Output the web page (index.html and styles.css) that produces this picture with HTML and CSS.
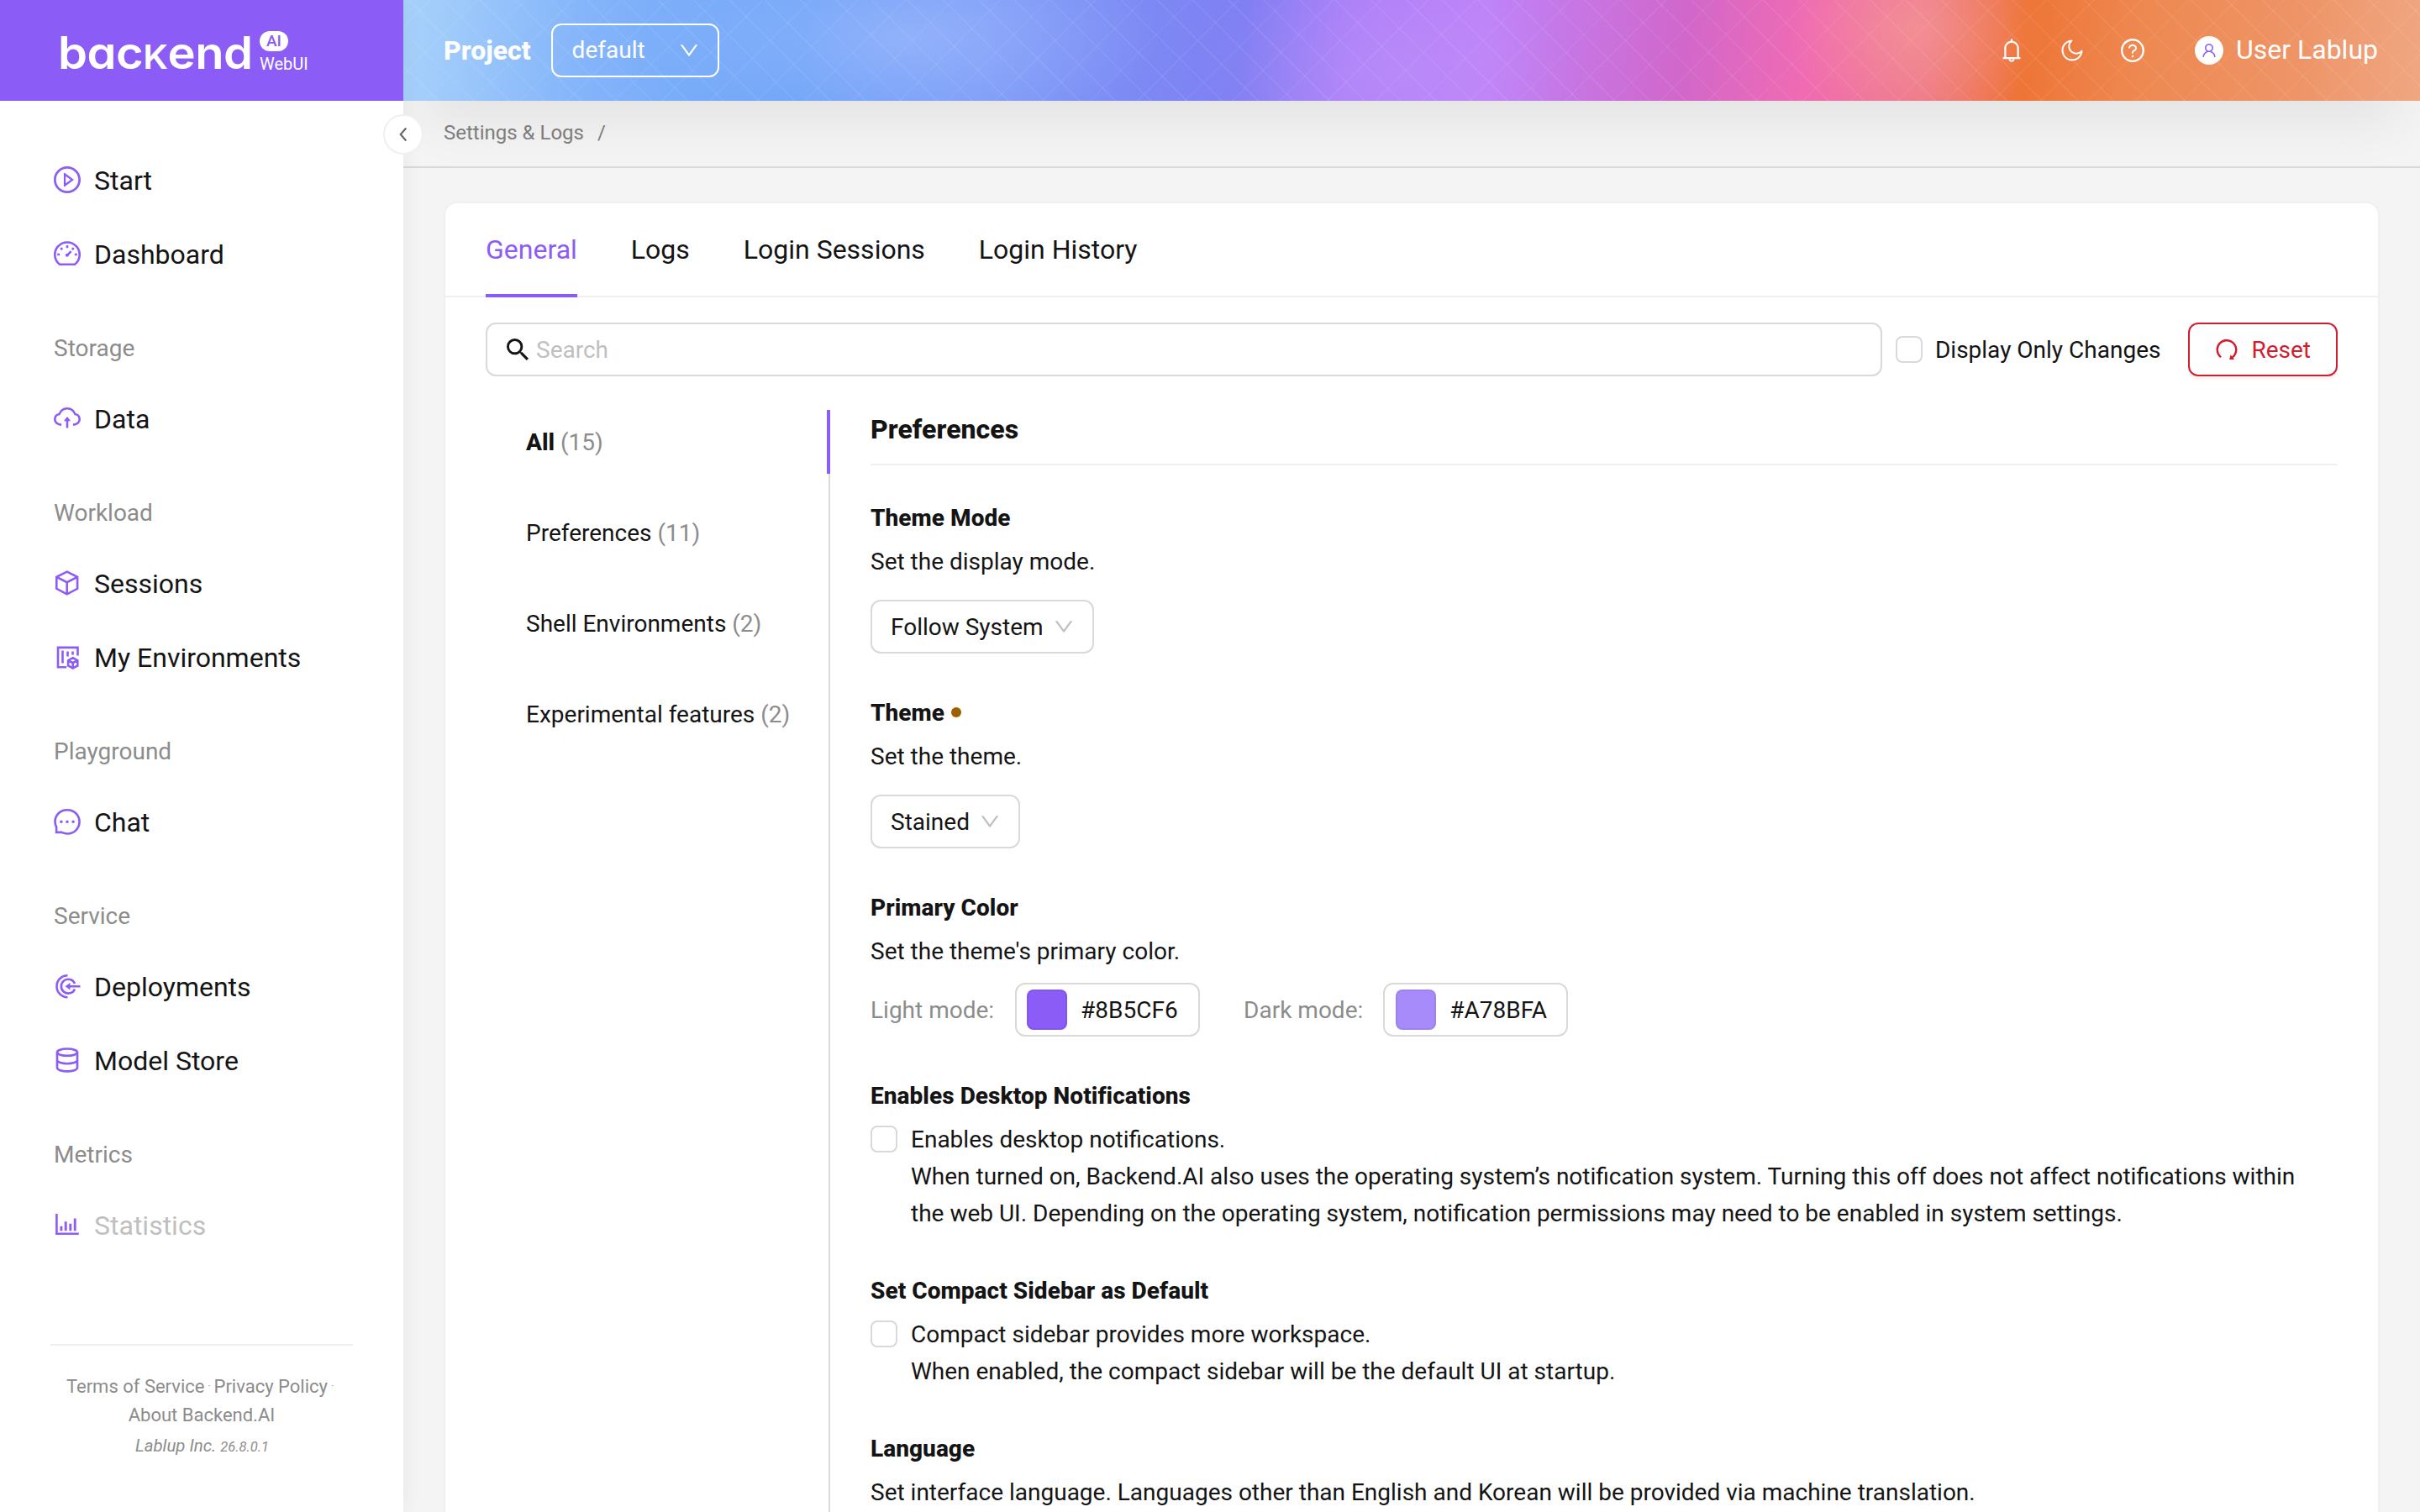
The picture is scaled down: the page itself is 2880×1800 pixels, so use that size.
FILE: index.html
```html
<!DOCTYPE html>
<html lang="en">
<head>
<meta charset="utf-8">
<title>Backend.AI WebUI</title>
<link rel="stylesheet" href="styles.css">
</head>
<body>
<svg class="sprite" aria-hidden="true">
  <symbol id="down" viewBox="64 64 896 896"><path d="M884 256h-75c-5.1 0-9.9 2.5-12.9 6.6L512 654.2 227.9 262.6c-3-4.1-7.8-6.6-12.9-6.6h-75c-6.5 0-10.3 7.4-6.5 12.7l352.6 486.1c12.8 17.6 39 17.6 51.7 0l352.6-486.1c3.9-5.3.1-12.7-6.4-12.7z"/></symbol>
  <symbol id="ring" viewBox="64 64 896 896"><path d="M512 64C264.6 64 64 264.6 64 512s200.6 448 448 448 448-200.6 448-448S759.4 64 512 64zm0 820c-205.4 0-372-166.6-372-372s166.6-372 372-372 372 166.6 372 372-166.6 372-372 372z"/></symbol>
</svg>
<div class="app">
  <aside class="sidebar">
    <div class="logo">
      <span class="logo-word">bac<span class="logo-k">k</span>end</span>
      <span class="logo-side"><span class="logo-ai">AI</span><span class="logo-web">WebUI</span></span>
    </div>
    <nav class="menu">
      <a class="item"><svg class="mi" viewBox="64 64 896 896"><use href="#ring" x="64" y="64" width="896" height="896"/><path d="M719.4 499.1l-296.1-215A15.9 15.9 0 00398 297v430c0 13.1 14.8 20.5 25.3 12.9l296.1-215a15.9 15.9 0 000-25.8zm-257.6 134V390.9L628.5 512 461.8 633.1z"/></svg>Start</a>
      <a class="item"><svg class="mi line" viewBox="0 0 32 32"><path d="M7 28.8A14.7 14.7 0 1 1 25 28.8Z"/><path d="M16 6v3.2M8.2 9.2l2 2M23.8 9.2l-2 2M4.2 17h3M24.8 17h3M16 17.8l4.6-4.6"/><circle class="dot" cx="15.8" cy="17.8" r="2"/></svg>Dashboard</a>
      <h4 class="group">Storage</h4>
      <a class="item"><svg class="mi line" viewBox="0 0 32 32"><path d="M9 23.600C4.500 23.600 1.300 20.800 1.300 17.200c0-3.200 2.200-5.500 5.200-6.100C8.200 6.700 11.700 4.200 16 4.200s7.800 2.500 9.500 6.900c3 .6 5.200 2.900 5.200 6.100 0 3.600-3.200 6.400-7.700 6.400M16 27.600V17"/><path class="dot" d="M16 13.900l4.200 5.300h-8.400z"/></svg>Data</a>
      <h4 class="group">Workload</h4>
      <a class="item"><svg class="mi line" viewBox="0 0 32 32"><path d="M15.700 2.600 28.100 8.900v13.900l-12.400 6.500-12.400-6.500V8.900ZM3.300 8.900l12.400 6.300 12.400-6.300M15.700 15.200v14.100"/></svg>Sessions</a>
      <a class="item"><svg class="mi line" viewBox="0 0 32 32"><path d="M28.500 14.500V4.900H5v23.300h10.200M10.500 8.500v15M16.500 9.500v6M22.500 9.500v4"/><path d="M22.700 17.200l5.600 3v6.200l-5.600 3.200-5.600-3.200v-6.200ZM17.100 20.200l5.600 3 5.600-3M22.700 23.200v6.400"/></svg>My Environments</a>
      <h4 class="group">Playground</h4>
      <a class="item"><svg class="mi line" viewBox="0 0 32 32"><path d="M16 2.200A14 14 0 0 1 30.500 16 14 14 0 0 1 16 30.500c-2.400 0-4.700-.7-6.600-1.600H3.100v-6.300A14.500 14.500 0 0 1 1.500 16 14 14 0 0 1 16 2.200Z"/><circle class="dot" cx="8.900" cy="16.300" r="1.700"/><circle class="dot" cx="16" cy="16.300" r="1.700"/><circle class="dot" cx="23.100" cy="16.300" r="1.700"/></svg>Chat</a>
      <h4 class="group">Service</h4>
      <a class="item"><svg class="mi line" viewBox="0 0 32 32"><path d="M16.500 3.200a13 13 0 1 0 0 26M25 13a8.400 8.400 0 1 0 0 6.400M31.500 16.200H18"/><path class="dot" d="M13.500 16.200l6-4.300v8.600z"/></svg>Deployments</a>
      <a class="item"><svg class="mi line" viewBox="0 0 32 32"><ellipse cx="16" cy="6.700" rx="12" ry="4.200"/><path d="M4 6.700v18.500c0 2.300 5.400 4.200 12 4.200s12-1.900 12-4.200V6.700M4 16c0 2.300 5.400 4.200 12 4.200S28 18.300 28 16"/></svg>Model Store</a>
      <h4 class="group">Metrics</h4>
      <a class="item off"><svg class="mi line" viewBox="0 0 32 32"><path d="M3.400 3v23.800h26.400"/><path class="bar" d="M8.900 23.300v-5.500M14.200 23.300v-11M19.800 23.300v-8.500M25.200 23.300V8.600"/></svg>Statistics</a>
    </nav>
    <footer class="foot">
      <div class="links">Terms of Service <i>·</i> Privacy Policy <i class="last">·</i><br>About Backend.AI</div>
      <div class="ver">Lablup Inc. <small>26.8.0.1</small></div>
    </footer>
    <button class="collapse"><svg viewBox="0 0 16 16"><path d="M10.600 2 5.400 8l5.200 6"/></svg></button>
  </aside>
  <main class="main">
    <header class="header">
      <b class="project">Project</b>
      <div class="hselect">default<svg viewBox="64 64 896 896"><use href="#down" x="64" y="64" width="896" height="896"/></svg></div>
      <div class="tools">
        <svg viewBox="64 64 896 896"><path d="M816 768h-24V428c0-141.1-104.300-257.800-240-277.200V112c0-22.100-17.900-40-40-40s-40 17.900-40 40v38.800C336.300 170.200 232 286.900 232 428v340h-24c-17.700 0-32 14.300-32 32v32c0 4.400 3.600 8 8 8h216c0 61.800 50.200 112 112 112s112-50.200 112-112h216c4.400 0 8-3.600 8-8v-32c0-17.700-14.300-32-32-32zM512 888c-26.500 0-48-21.500-48-48h96c0 26.500-21.500 48-48 48zM304 768V428c0-55.600 21.600-107.800 60.900-147.100S456.400 220 512 220c55.600 0 107.800 21.600 147.100 60.900S720 372.400 720 428v340H304z"/></svg>
        <svg viewBox="64 64 896 896"><path d="M489.500 111.660c30.650-1.800 45.980 36.440 22.580 56.330A243.350 243.350 0 00426 354c0 134.760 109.240 244 244 244 72.580 0 139.900-31.830 186.010-86.080 19.870-23.380 58.070-8.100 56.340 22.530C900.400 745.820 725.150 912 512.500 912 291.310 912 112 732.690 112 511.500c0-211.390 164.290-386.020 374.200-399.650l.2-.01zm-81.150 79.750l-4.110 1.360C271.100 237.940 176 364.090 176 511.500 176 697.340 326.660 848 512.500 848c148.280 0 274.940-96.200 319.450-230.410l.63-1.930-.11.07a307.060 307.060 0 01-159.730 46.260L670 662c-170.100 0-308-137.900-308-308 0-58.600 16.480-114.540 46.270-162.470z"/></svg>
        <svg viewBox="64 64 896 896"><use href="#ring" x="64" y="64" width="896" height="896"/><path d="M623.600 316.700C593.600 290.400 554 276 512 276s-81.600 14.500-111.600 40.700C369.200 344 352 380.700 352 420v7.600c0 4.400 3.600 8 8 8h48c4.400 0 8-3.600 8-8V420c0-44.100 43.100-80 96-80s96 35.900 96 80c0 31.100-22 59.600-56.100 72.700-21.200 8.100-39.200 22.300-52.100 40.900-13.100 19-19.900 41.800-19.900 64.900V620c0 4.400 3.600 8 8 8h48c4.400 0 8-3.600 8-8v-22.700a48.300 48.300 0 0130.900-44.800c59-22.700 97.100-74.700 97.100-132.500.1-39.300-17.100-76-48.300-103.300zM472 732a40 40 0 1080 0 40 40 0 10-80 0z"/></svg>
      </div>
      <div class="user">
        <span class="avatar"><svg viewBox="64 64 896 896"><path d="M858.500 763.600a374 374 0 00-80.600-119.500 375.630 375.630 0 00-119.500-80.600c-.4-.2-.8-.3-1.200-.5C719.500 518 760 444.700 760 362c0-137-111-248-248-248S264 225 264 362c0 82.700 40.500 156 102.800 201.100-.4.2-.8.3-1.200.5-44.800 18.900-85 46-119.500 80.600a375.630 375.630 0 00-80.600 119.500A371.700 371.700 0 00136 901.800a8 8 0 008 8.200h60c4.400 0 7.900-3.500 8-7.800 2-77.200 33-149.500 87.800-204.300 56.700-56.700 132-87.900 212.200-87.900s155.500 31.200 212.200 87.900C779 752.700 810 825 812 902.200c.1 4.400 3.600 7.800 8 7.800h60a8 8 0 008-8.200c-1-47.800-10.900-94.300-29.500-138.200zM512 534c-45.900 0-89.100-17.900-121.600-50.400S340 407.900 340 362c0-45.900 17.900-89.100 50.400-121.600S466.100 190 512 190s89.100 17.900 121.600 50.400S684 316.100 684 362c0 45.900-17.900 89.100-50.400 121.600S557.900 534 512 534z"/></svg></span>
        <span class="name">User Lablup</span>
      </div>
    </header>
    <div class="crumbs"><span>Settings &amp; Logs</span><span>/</span></div>
    <section class="card">
      <div class="tabs"><a class="tab on">General</a><a class="tab">Logs</a><a class="tab">Login Sessions</a><a class="tab">Login History</a></div>
      <div class="body">
        <div class="filter">
          <div class="search"><svg viewBox="3 3 17.500 17.500"><path d="M15.500 14h-.79l-.28-.27A6.471 6.471 0 0 0 16 9.500 6.500 6.500 0 1 0 9.500 16c1.610 0 3.090-.59 4.230-1.570l.27.28v.79l5 4.990L20.490 19l-4.990-5zm-6 0C7.010 14 5 11.990 5 9.500S7.010 5 9.500 5 14 7.010 14 9.500 11.990 14 9.500 14z"/></svg>Search</div>
          <label class="only"><span class="box"></span>Display Only Changes</label>
          <button class="reset"><svg viewBox="64 64 896 896"><path d="M758.200 839.100C851.800 765.900 912 651.900 912 523.900 912 303 733.500 124.300 512.600 124 291.400 123.700 112 302.800 112 523.900c0 125.200 57.500 236.900 147.600 310.200 3.500 2.800 8.600 2.200 11.400-1.300l39.400-50.500c2.700-3.400 2.100-8.300-1.200-11.100-8.100-6.600-15.900-13.700-23.400-21.200a318.640 318.640 0 01-68.600-101.700C200.400 609 192 567.100 192 523.900s8.400-85.100 25.100-124.500c16.100-38.100 39.200-72.300 68.600-101.700 29.400-29.400 63.600-52.500 101.700-68.600C426.900 212.400 468.800 204 512 204s85.100 8.400 124.500 25.100c38.100 16.100 72.300 39.200 101.700 68.600 29.400 29.400 52.500 63.600 68.600 101.700 16.700 39.400 25.100 81.300 25.100 124.500s-8.400 85.100-25.100 124.500a318.640 318.640 0 01-68.600 101.700c-9.300 9.300-19.100 18-29.300 26L668.200 724a8 8 0 00-14.100 3l-39.600 162.200c-1.200 5 2.600 9.900 7.700 9.900l167 .8c6.700 0 10.500-7.700 6.300-12.900l-37.300-47.900z"/></svg>Reset</button>
        </div>
        <div class="split">
          <div class="cats">
            <a class="cat on"><span><b>All</b> <em>(15)</em></span></a>
            <a class="cat"><span>Preferences <em>(11)</em></span></a>
            <a class="cat"><span>Shell Environments <em>(2)</em></span></a>
            <a class="cat"><span>Experimental features <em>(2)</em></span></a>
          </div>
          <div class="settings">
            <h2>Preferences</h2>
            <div class="list">
              <div class="set"><h3>Theme Mode</h3><p>Set the display mode.</p>
                <div class="select">Follow System<svg viewBox="64 64 896 896"><use href="#down" x="64" y="64" width="896" height="896"/></svg></div></div>
              <div class="set"><h3>Theme<span class="changed"></span></h3><p>Set the theme.</p>
                <div class="select">Stained<svg viewBox="64 64 896 896"><use href="#down" x="64" y="64" width="896" height="896"/></svg></div></div>
              <div class="set"><h3>Primary Color</h3><p>Set the theme's primary color.</p>
                <div class="colors">
                  <div class="color"><span>Light mode:</span><div class="picker"><span class="swatch light"></span>#8B5CF6</div></div>
                  <div class="color"><span>Dark mode:</span><div class="picker"><span class="swatch dark"></span>#A78BFA</div></div>
                </div></div>
              <div class="set"><h3>Enables Desktop Notifications</h3>
                <label class="check"><span class="box"></span><span class="desc">Enables desktop notifications.<br>When turned on, Backend.AI also uses the operating system’s notification system. Turning this off does not affect notifications within the web UI. Depending on the operating system, notification permissions may need to be enabled in system settings.</span></label></div>
              <div class="set"><h3>Set Compact Sidebar as Default</h3>
                <label class="check"><span class="box"></span><span class="desc">Compact sidebar provides more workspace.<br>When enabled, the compact sidebar will be the default UI at startup.</span></label></div>
              <div class="set"><h3>Language</h3><p>Set interface language. Languages other than English and Korean will be provided via machine translation.</p></div>
            </div>
          </div>
        </div>
      </div>
    </section>
  </main>
</div>
</body>
</html>
```
FILE: styles.css
```css
* { box-sizing: border-box; }
body {
  margin: 0;
  height: 1800px;
  overflow: hidden;
  background: #f4f4f4;
  color: #141414;
  font: 28px/44px Roboto, "Liberation Sans", sans-serif;
}
h2, h3, h4, p { margin: 0; }
h2, h3, b { font-weight: 800; }
h2, h3 { letter-spacing: .05px; }
svg { display: block; flex: none; fill: currentColor; }
button { font: inherit; }
.sprite { position: absolute; width: 0; height: 0; }
.app { display: flex; height: 1800px; }

/* Sidebar */
.sidebar {
  position: relative;
  z-index: 2;
  display: flex;
  flex-direction: column;
  flex: none;
  width: 480px;
  background: #fff;
  box-shadow: 0 0 24px rgba(0, 0, 0, .06);
}
.logo {
  display: flex;
  align-items: flex-start;
  gap: 9px;
  height: 120px;
  padding: 35px 0 0 69px;
  background: #8b5cf6;
  color: #fff;
}
.logo-word {
  width: 231px;
  white-space: nowrap;
  font: 600 53px/56px Inter, sans-serif;
  font-feature-settings: "cv11";
  letter-spacing: -.5px;
  transform: scaleX(1.06);
  transform-origin: left;
}
.logo-k { font-size: 40px; text-transform: uppercase; }
.logo-side { display: flex; flex-direction: column; align-items: flex-start; gap: 3px; padding-top: 2px; }
.logo-ai {
  width: 34px;
  border-radius: 12px;
  background: #fff;
  color: #8b5cf6;
  font: 500 19px/24px Roboto, sans-serif;
  text-align: center;
}
.logo-web { font-size: 20px; line-height: 24px; }
.menu { display: flex; flex-direction: column; flex: 1; padding: 50px 64px 0; }
.item { display: flex; align-items: center; gap: 16px; height: 88px; padding-top: 2px; font-size: 32px; }
.off { color: #bfbfbf; }
.mi { width: 32px; height: 32px; margin-top: -2px; color: #8b5cf6; }
.line { fill: none; stroke: currentColor; stroke-width: 2.600; }
.line .dot { fill: currentColor; stroke: none; }
.line .bar { stroke-width: 2.900; }
.group { height: 108px; padding-top: 47px; color: #8c8c8c; font-weight: 400; font-size: 28px; }
.foot {
  margin: 0 60px;
  height: 200px;
  padding-top: 32px;
  border-top: 2px solid #f0f0f0;
  color: #8c8c8c;
  font-size: 22px;
  line-height: 34px;
  text-align: center;
}
.links i { margin: 0 -1.500px; font-size: 12px; font-style: normal; vertical-align: 4px; line-height: 1; }
.links .last { margin-right: 4px; }
.ver { margin-top: 2px; padding-left: 1px; font-size: 20.400px; font-style: italic; }
.ver small { font-size: 16.500px; }
.collapse {
  position: absolute;
  left: 456px;
  top: 136px;
  display: flex;
  align-items: center;
  justify-content: center;
  width: 48px;
  height: 48px;
  padding: 0;
  border: 2px solid #f0f0f0;
  border-radius: 50%;
  background: #fff;
  color: #666;
}
.collapse svg { width: 20px; height: 20px; fill: none; stroke: currentColor; stroke-width: 1.700; }

/* Header */
.main { display: flex; flex-direction: column; flex: 1; min-width: 0; }
.header {
  position: relative;
  display: flex;
  align-items: center;
  flex: none;
  height: 120px;
  padding: 0 50px 0 48px;
  color: #fff;
  font-size: 32px;
  background:
    repeating-linear-gradient(45deg, transparent 0 28px, rgba(255, 255, 255, .08) 29px 30px),
    repeating-linear-gradient(-45deg, transparent 0 38px, rgba(255, 255, 255, .06) 39px 40px),
    radial-gradient(ellipse 300px 130px at 600px 45px, rgba(190, 205, 255, .42), transparent),
    radial-gradient(ellipse 220px 130px at 1170px 85px, rgba(200, 170, 250, .25), transparent),
    radial-gradient(ellipse 150px 130px at 1800px 35px, rgba(248, 180, 160, .42), transparent),
    linear-gradient(95deg, #a8d2fb 0, #84b4fa 220px, #6ba2f8 480px, #7899f7 700px, #807ff3 1000px, #ad7ef8 1130px, #be82f8 1290px, #d167cb 1520px, #f06bb2 1670px, #ee7488 1810px, #ee7436 1925px, #ee8850 2060px, #ee9467 2250px, #f0a985 2420px);
  box-shadow: 0 48px 64px -24px rgba(0, 0, 0, .075);
}
.project { font-size: 32px; }
.hselect {
  display: flex;
  align-items: center;
  justify-content: space-between;
  width: 200px;
  height: 64px;
  margin-left: 24px;
  padding: 0 22px 0 23px;
  border: 2px solid #fff;
  border-radius: 12px;
  font-size: 28px;
}
.hselect svg { width: 24px; height: 24px; }
.tools { display: flex; gap: 44px; margin-left: auto; }
.tools svg { width: 28px; height: 28px; }
.user { display: flex; align-items: center; gap: 15px; margin-left: 60px; }
.name { padding-bottom: 2px; }
.avatar { display: flex; align-items: center; justify-content: center; width: 34px; height: 34px; border-radius: 50%; background: #fff; color: #8b5cf6; }
.avatar svg { width: 18px; height: 18px; }
.crumbs {
  display: flex;
  align-items: center;
  flex: none;
  gap: 16px;
  height: 80px;
  padding: 0 48px 2px;
  border-bottom: 2px solid #d9d9d9;
  color: #808080;
  font-size: 24px;
}

/* Settings card */
.card {
  display: flex;
  flex-direction: column;
  flex: 1;
  min-height: 0;
  margin: 40px 48px 0;
  border: 2px solid #f0f0f0;
  border-bottom: 0;
  border-radius: 16px 16px 0 0;
  background: #fff;
}
.tabs { display: flex; flex: none; gap: 64px; height: 112px; padding: 0 48px; border-bottom: 2px solid #f0f0f0; }
.tab { height: 112px; font-size: 32px; line-height: 110px; }
.tab.on { border-bottom: 4px solid #8b5cf6; color: #8b5cf6; }
.body { flex: 1; min-height: 0; padding: 30px 48px 0; }
.filter { display: flex; align-items: center; height: 64px; }
.search {
  display: flex;
  align-items: center;
  flex: 1;
  gap: 9px;
  height: 64px;
  padding: 2px 23px 0;
  border: 2px solid #d9d9d9;
  border-radius: 12px;
  color: #bfbfbf;
}
.search svg { width: 26px; height: 26px; margin-top: -2px; color: #141414; }
.only { display: flex; align-items: center; gap: 15px; margin: 0 33px 0 16px; padding-top: 2px; }
.only .box { margin-top: -2px; }
.box { flex: none; width: 32px; height: 32px; border: 2px solid #d9d9d9; border-radius: 8px; background: #fff; }
.reset {
  display: flex;
  align-items: center;
  gap: 15px;
  height: 64px;
  padding: 2px 30px 0;
  border: 2px solid #cf1f2e;
  border-radius: 12px;
  background: #fff;
  box-shadow: 0 4px 0 rgba(255, 38, 5, .06);
  color: #cf1f2e;
}
.reset svg { width: 28px; height: 28px; margin-top: -2px; }
.split { display: flex; margin-top: 40px; }
.cats { display: flex; flex-direction: column; flex: none; gap: 32px; width: 410px; height: 1400px; border-right: 2px solid #d9d9d9; }
.cat { display: flex; align-items: center; height: 76px; margin-right: -2px; padding: 2px 0 0 48px; }
.cat.on { border-right: 4px solid #8b5cf6; }
.cat em { color: #8c8c8c; font-style: normal; }
.settings { flex: 1; min-width: 0; padding-left: 48px; }
.settings h2 { height: 66px; border-bottom: 2px solid #f0f0f0; font-size: 32px; line-height: 47px; }
.list { display: flex; flex-direction: column; gap: 48px; padding-top: 40px; }
.set { display: flex; flex-direction: column; align-items: flex-start; gap: 8px; }
.set h3, .set p { height: 44px; line-height: 46px; }
.set h3 { display: flex; gap: 8px; font-size: 28px; }
.changed { width: 12px; height: 12px; margin-top: 16px; border-radius: 50%; background: #9e5f00; }
.select {
  display: flex;
  align-items: center;
  gap: 12px;
  height: 64px;
  margin-top: 16px;
  padding: 2px 22px 0;
  border: 2px solid #d9d9d9;
  border-radius: 12px;
}
.select svg { width: 24px; height: 24px; margin-top: -2px; color: #bfbfbf; }
.colors { display: flex; gap: 52px; margin-top: 8px; }
.color { display: flex; align-items: center; gap: 25px; color: #8c8c8c; }
.color + .color { gap: 24px; }
.color > span { padding-top: 2px; }
.picker {
  display: flex;
  align-items: center;
  gap: 16px;
  width: 220px;
  height: 64px;
  padding: 2px 0 0 12px;
  border: 2px solid #d9d9d9;
  border-radius: 12px;
  color: #141414;
}
.color + .color .picker { padding-left: 13px; }
.swatch { width: 48px; height: 48px; margin-top: -2px; border-radius: 8px; box-shadow: inset 0 0 0 2px rgba(0, 0, 0, .06); }
.light { background: #8b5cf6; }
.dark { background: #a78bfa; }
.check { display: flex; gap: 16px; margin-bottom: -1px; }
.check .box { margin-top: 6px; }
.desc { padding: 1px 16px 0 0; }
```
